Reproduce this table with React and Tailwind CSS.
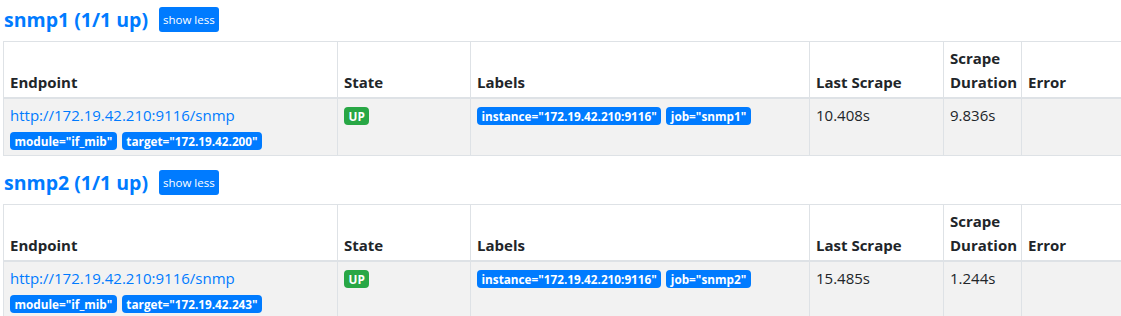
import React from 'react';

const pools = [
    {
        name: 'snmp1',
        endpoint: 'http://172.19.42.210:9116/snmp',
        params: ['module="if_mib"', 'target="172.19.42.200"'],
        labels: ['instance="172.19.42.210:9116"', 'job="snmp1"'],
        lastScrape: '10.408s',
        duration: '9.836s',
    },
    {
        name: 'snmp2',
        endpoint: 'http://172.19.42.210:9116/snmp',
        params: ['module="if_mib"', 'target="172.19.42.243"'],
        labels: ['instance="172.19.42.210:9116"', 'job="snmp2"'],
        lastScrape: '15.485s',
        duration: '1.244s',
    },
];

const Badge = ({ children, color = 'bg-[#007bff]' }) => (
    <span className={`${color} inline-block rounded-[4px] px-[4.5px] py-[3px] text-[11.75px] font-bold leading-[12px] text-white whitespace-nowrap`}>
        {children}
    </span>
);

const th = 'border border-[#dee2e6] border-b-2 px-[6px] pt-[4px] pb-[3px] text-left align-bottom font-bold leading-6';
const td = 'border border-[#dee2e6] px-[6px] pt-[4px] pb-[5px] align-top leading-6';

const ScrapePool = ({ pool }) => (
    <div className="mb-[7px]">
        {/* Header */}
        <div className="flex h-[39px] items-center gap-[11px] pl-[1px]">
            <h2 className="text-[19.5px] font-bold text-[#007bff]">{pool.name} (1/1 up)</h2>
            <button className="h-[25px] rounded-[3px] bg-[#007bff] px-[4px] text-[11.5px] text-white">show less</button>
        </div>

        {/* Targets */}
        <table className="mt-[2px] w-[1140px] table-fixed border-collapse text-[15px] text-[#212529]">
            <colgroup>
                <col className="w-[334px]" />
                <col className="w-[133px]" />
                <col className="w-[339px]" />
                <col className="w-[134px]" />
                <col className="w-[78px]" />
                <col />
            </colgroup>
            <thead>
                <tr>
                    <th className={th}>Endpoint</th>
                    <th className={th}>State</th>
                    <th className={th}>Labels</th>
                    <th className={th}>Last Scrape</th>
                    <th className={th}>Scrape Duration</th>
                    <th className={th}>Error</th>
                </tr>
            </thead>
            <tbody>
                <tr className="bg-[#f2f2f2]">
                    <td className={td}>
                        <a href="#" className="block text-[#007bff]">{pool.endpoint}</a>
                        <div className="mt-[5px] flex gap-[5px]">
                            {pool.params.map((p) => <Badge key={p}>{p}</Badge>)}
                        </div>
                    </td>
                    <td className={td}>
                        <div className="flex h-6 items-center pt-[2px]">
                            <Badge color="bg-[#28a745]">UP</Badge>
                        </div>
                    </td>
                    <td className={td}>
                        <div className="flex h-6 items-center gap-[5px] pt-[2px]">
                            {pool.labels.map((l) => <Badge key={l}>{l}</Badge>)}
                        </div>
                    </td>
                    <td className={td}>{pool.lastScrape}</td>
                    <td className={td}>{pool.duration}</td>
                    <td className={td}></td>
                </tr>
            </tbody>
        </table>
    </div>
);

export default function App() {
    return (
        <div className="h-[316px] w-[1121px] overflow-hidden bg-white pl-[3px] font-['Segoe_UI','Open_Sans',sans-serif]">
            {pools.map((pool) => <ScrapePool key={pool.name} pool={pool} />)}
        </div>
    );
}
